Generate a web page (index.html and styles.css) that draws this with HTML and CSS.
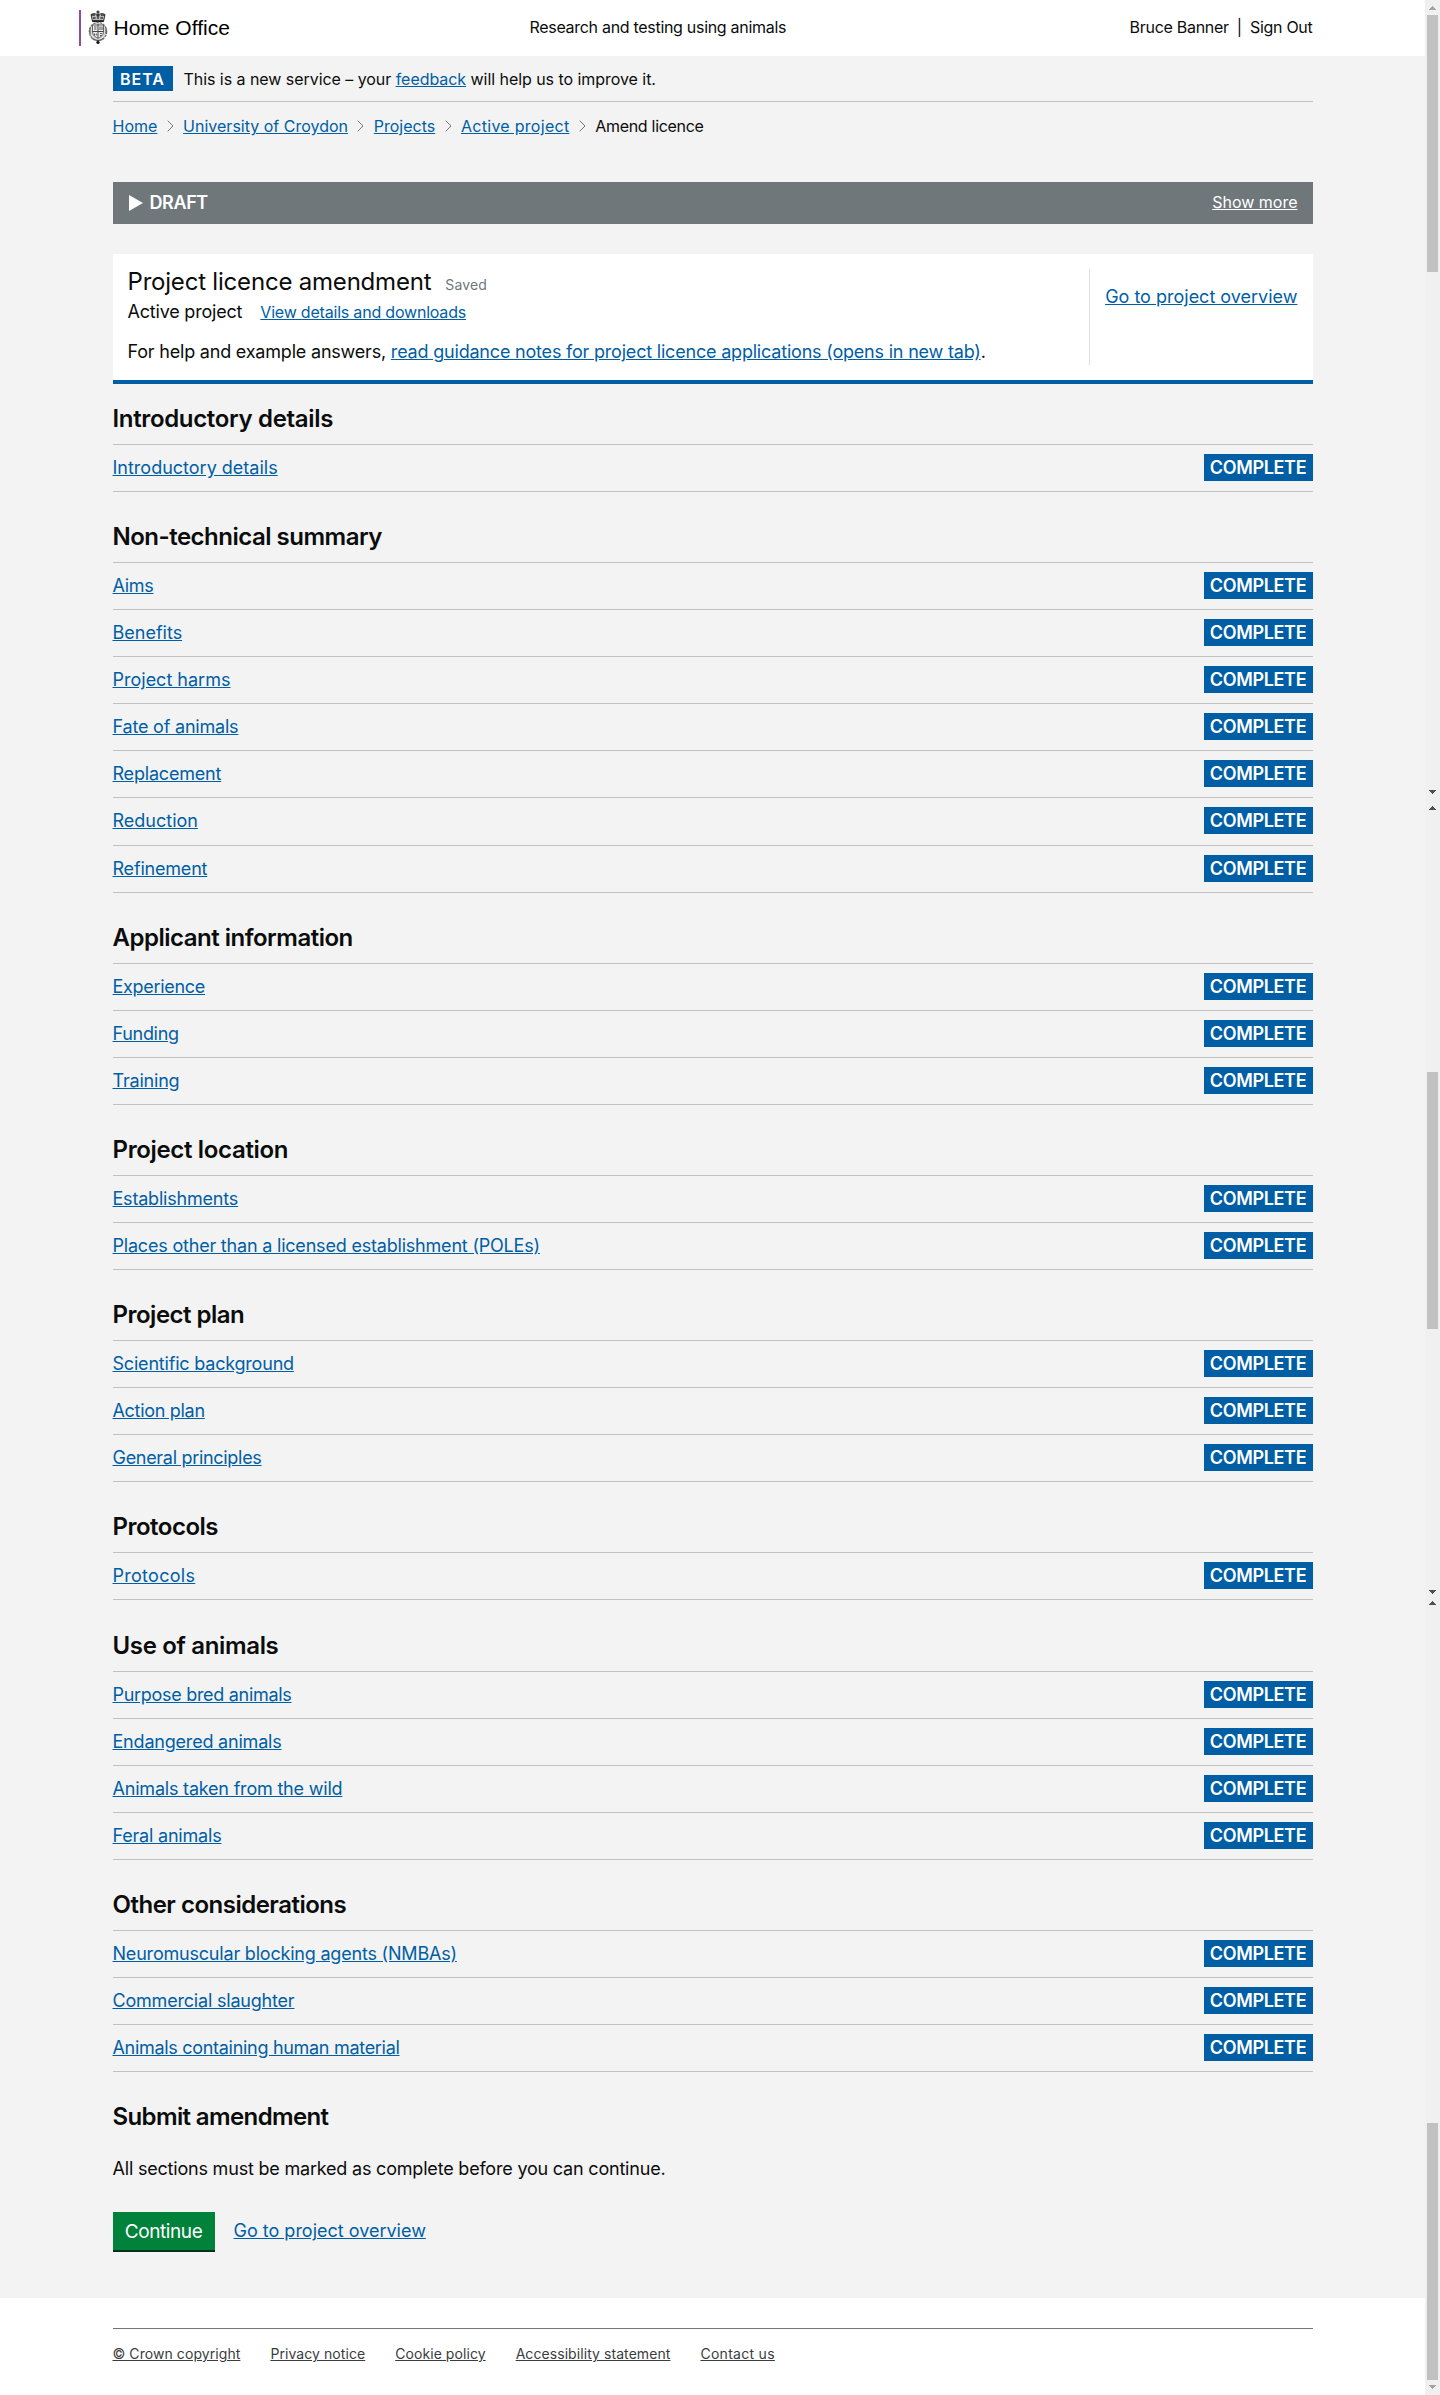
FILE: index.html
```
<!DOCTYPE html>
<html lang="en">
<head>
<meta charset="utf-8">
<title>Project licence amendment</title>
<link rel="stylesheet" href="styles.css">
</head>
<body>
<header class="header">
  <div class="header-inner">
    <div class="logo">
      <svg class="crest" width="20" height="36" viewBox="0 0 20 36" fill="none" stroke="#333" aria-hidden="true">
        <path d="M10 .5v4M8.500 2h3" stroke-width="1.300"/>
        <path d="M3 4.500l1.500 7h11l1.500-7-2.500-1-4.500 1-4.500-1z" fill="#bbb" stroke-width="1"/>
        <path d="M3 5h4M8.500 5.500h3M13 5h4M5 8h2.500M12.500 8H15M10 6v3" stroke-width="1.400"/>
        <path d="M4.500 11h11" stroke="#111" stroke-width="1.600"/>
        <ellipse cx="10" cy="21.500" rx="8.600" ry="9" fill="#ddd" stroke="#777" stroke-width="1.400" stroke-dasharray="2.500 .8"/>
        <path d="M4.500 15h11v7c0 4-3.500 5-5.500 6.500-2-1.500-5.500-2.500-5.500-6.500z" fill="#eee" stroke="#555" stroke-width=".9"/>
        <path d="M10 14v14M4.500 21.500h11" stroke="#444" stroke-width="1"/>
        <path d="M6 17h2.500M6 19h2.500M12 16.500v3.500M14 16.500v3.500M6.500 23.500v2M8.300 23.500v2M12 23.500h2M12 25.500h2M2 18v6M18 18v6" stroke="#555" stroke-width="1"/>
        <path d="M4 28.500l6 2.500 6-2.500" stroke="#666" stroke-width="1.200"/>
        <path d="M10 30.500v3.500M8.300 32.500h3.400" stroke="#111" stroke-width="1.600"/>
      </svg>
      <span class="logo-text">Home Office</span>
    </div>
    <div class="service">Research and testing using animals</div>
    <div class="user"><span>Bruce Banner</span><span>|</span><span>Sign Out</span></div>
  </div>
</header>
<main class="page">
  <div class="phase"><strong class="phase-tag">BETA</strong><span>This is a new service – your <a href="#">feedback</a> will help us to improve it.</span></div>
  <nav class="crumbs">
    <a href="#">Home</a>
    <svg width="7" height="12" viewBox="0 0 7 12"><path d="M.7.700L6 6 .7 11.300" fill="none" stroke="#6f777b"/></svg>
    <a href="#">University of Croydon</a>
    <svg width="7" height="12" viewBox="0 0 7 12"><path d="M.7.700L6 6 .7 11.300" fill="none" stroke="#6f777b"/></svg>
    <a href="#">Projects</a>
    <svg width="7" height="12" viewBox="0 0 7 12"><path d="M.7.700L6 6 .7 11.300" fill="none" stroke="#6f777b"/></svg>
    <a class="loose" href="#">Active project</a>
    <svg width="7" height="12" viewBox="0 0 7 12"><path d="M.7.700L6 6 .7 11.300" fill="none" stroke="#6f777b"/></svg>
    <span class="snug">Amend licence</span>
  </nav>
  <div class="status"><span class="status-name"><svg width="14" height="16" viewBox="0 0 14 16"><path d="M0 0l14 8-14 8z" fill="#fff"/></svg>DRAFT</span><a href="#">Show more</a></div>
  <section class="banner">
    <div class="banner-main">
      <div class="title-row"><h1>Project licence amendment</h1><span class="saved">Saved</span></div>
      <div class="sub-row"><span>Active project</span><a href="#">View details and downloads</a></div>
      <p class="help">For help and example answers, <a href="#">read guidance notes for project licence applications (opens in new tab)</a>.</p>
    </div>
    <div class="banner-side"><a class="even" href="#">Go to project overview</a></div>
  </section>
  <section class="group"><h2 class="wide">Introductory details</h2><ul>
    <li><a class="even" href="#">Introductory details</a><b>COMPLETE</b></li>
  </ul></section>
  <section class="group"><h2>Non-technical summary</h2><ul>
    <li><a class="snug" href="#">Aims</a><b>COMPLETE</b></li>
    <li><a class="even" href="#">Benefits</a><b>COMPLETE</b></li>
    <li><a class="even" href="#">Project harms</a><b>COMPLETE</b></li>
    <li><a href="#">Fate of animals</a><b>COMPLETE</b></li>
    <li><a href="#">Replacement</a><b>COMPLETE</b></li>
    <li><a class="even" href="#">Reduction</a><b>COMPLETE</b></li>
    <li><a href="#">Refinement</a><b>COMPLETE</b></li>
  </ul></section>
  <section class="group"><h2>Applicant information</h2><ul>
    <li><a class="snug" href="#">Experience</a><b>COMPLETE</b></li>
    <li><a class="snug" href="#">Funding</a><b>COMPLETE</b></li>
    <li><a href="#">Training</a><b>COMPLETE</b></li>
  </ul></section>
  <section class="group"><h2 class="wide">Project location</h2><ul>
    <li><a href="#">Establishments</a><b>COMPLETE</b></li>
    <li><a href="#">Places other than a licensed establishment (POLEs)</a><b>COMPLETE</b></li>
  </ul></section>
  <section class="group"><h2>Project plan</h2><ul>
    <li><a href="#">Scientific background</a><b>COMPLETE</b></li>
    <li><a class="snug" href="#">Action plan</a><b>COMPLETE</b></li>
    <li><a class="snug" href="#">General principles</a><b>COMPLETE</b></li>
  </ul></section>
  <section class="group"><h2>Protocols</h2><ul>
    <li><a class="loose" href="#">Protocols</a><b>COMPLETE</b></li>
  </ul></section>
  <section class="group"><h2 class="wide">Use of animals</h2><ul>
    <li><a class="snug" href="#">Purpose bred animals</a><b>COMPLETE</b></li>
    <li><a href="#">Endangered animals</a><b>COMPLETE</b></li>
    <li><a href="#">Animals taken from the wild</a><b>COMPLETE</b></li>
    <li><a href="#">Feral animals</a><b>COMPLETE</b></li>
  </ul></section>
  <section class="group"><h2>Other considerations</h2><ul>
    <li><a href="#">Neuromuscular blocking agents (NMBAs)</a><b>COMPLETE</b></li>
    <li><a href="#">Commercial slaughter</a><b>COMPLETE</b></li>
    <li><a class="snug" href="#">Animals containing human material</a><b>COMPLETE</b></li>
  </ul></section>
  <section class="submit">
    <h2 class="tight">Submit amendment</h2>
    <p>All sections must be marked as complete before you can continue.</p>
    <div class="actions"><button class="continue" type="button">Continue</button><a class="even" href="#">Go to project overview</a></div>
  </section>
</main>
<footer class="footer">
  <div class="footer-inner">
    <a href="#">© Crown copyright</a><a href="#">Privacy notice</a><a href="#">Cookie policy</a><a href="#">Accessibility statement</a><a class="loose" href="#">Contact us</a>
  </div>
</footer>
<svg class="scrollbar" width="15" height="2395" viewBox="0 0 15 2395" shape-rendering="crispEdges" aria-hidden="true">
  <path d="M0 0h15v2395H0z" fill="#f0f0f0"/>
  <path d="M2 15h11v257H2zM2 1072h11v257H2zM2 2123h11v257H2z" fill="#c1c1c1"/>
  <path d="M4 10l3.500-4 3.500 4zM4 2385l3.500 4 3.500-4z" fill="#a3a3a3"/>
  <path d="M4 790l3.500 4 3.500-4zM4 810l3.500-4 3.500 4zM4 1590l3.500 4 3.500-4zM4 1605l3.500-4 3.500 4z" fill="#505050"/>
</svg>
</body>
</html>
```
FILE: styles.css
```
* { box-sizing: border-box; }
body { margin: 0; position: relative; height: 2395px; display: flex; flex-direction: column; background: #fff; color: #0b0c0c; font: 18px/25px Inter, sans-serif; letter-spacing: -.2px; padding-right: 15px; }
a { color: #005ea5; text-decoration: underline; }
h1, h2, p, ul { margin: 0; padding: 0; font-weight: inherit; }
.header { height: 56px; }
.header-inner { width: 1200px; margin: 0 auto; padding-top: 10px; display: grid; grid-template-columns: 450px 1fr auto; font-size: 16px; line-height: 34px; }
.logo { display: flex; align-items: center; gap: 6px; height: 36px; margin-left: -34px; padding-left: 7px; border-left: 2px solid #8b4ba3; }
.logo-text { font: 21px/34px "Liberation Sans", Arial, sans-serif; color: #000; letter-spacing: 0; }
.service { margin-left: -33px; letter-spacing: -.3px; }
.user { display: flex; gap: 8px; letter-spacing: -.28px; }
.page { background: #f3f3f3; height: 2242px; padding: 0 calc((100% - 1200px) / 2); }
.phase { height: 46px; padding-top: 10px; border-bottom: 1px solid #bfc1c3; display: flex; gap: 11px; font-size: 16px; line-height: 26px; letter-spacing: -.05px; }
.phase-tag { background: #005ea5; color: #fff; height: 25px; width: 60px; text-align: center; letter-spacing: 1px; font-weight: 600; line-height: 26px; }
.crumbs { display: flex; align-items: center; gap: 9.4px; height: 50px; padding-bottom: 2px; font-size: 16px; line-height: 20px; letter-spacing: 0; }
.status { margin-top: 30px; height: 42px; padding: 0 15px 0 16px; background: #6f777b; color: #fff; display: flex; justify-content: space-between; line-height: 40px; font-size: 16px; letter-spacing: 0; }
.status-name { font-size: 18px; font-weight: 600; display: flex; align-items: center; gap: 7px; letter-spacing: -.4px; }
.status a { color: #fff; }
.banner { margin-top: 30px; height: 130px; background: #fff; border-bottom: 4px solid #005ea5; padding: 15px; display: flex; justify-content: space-between; }
.title-row { display: flex; align-items: baseline; gap: 14px; line-height: 26px; }
h1 { font-size: 24px; }
.saved { font-size: 14px; color: #6f777b; letter-spacing: .1px; }
.sub-row { display: flex; align-items: baseline; gap: 18px; margin-top: -1px; line-height: 29px; }
.sub-row a { font-size: 16px; }
.help { margin-top: 12px; }
.banner-side { border-left: 1px solid #dee0e2; padding: 15px 0 0 15px; height: 96px; }
.group { margin-bottom: 30.08px; }
.banner + .group { margin-top: 20px; }
h2 { font-size: 24px; font-weight: 600; line-height: 30px; letter-spacing: -.5px; }
.group ul { list-style: none; margin-top: 10px; border-top: 1px solid #bfc1c3; }
.group li { height: 47.0625px; border-bottom: 1px solid #bfc1c3; display: flex; justify-content: space-between; padding-top: 9px; line-height: 27px; }
.group b { background: #005ea5; color: #fff; font-weight: 600; height: 27px; width: 109px; text-align: center; letter-spacing: -.35px; }
.submit p { margin-top: 24px; }
.actions { display: flex; gap: 19px; margin-top: 31px; line-height: 38px; }
.continue { width: 102px; height: 40px; padding: 2px 0 0; border: 0; border-bottom: 2px solid #00311e; background: #00823b; color: #fff; font: 19px/36px Inter, sans-serif; letter-spacing: -.4px; }
.footer-inner { width: 1200px; margin: 30px auto 0; border-top: 1px solid #6f777b; padding-top: 15px; display: flex; gap: 30px; font-size: 14px; line-height: 20px; letter-spacing: .07px; }
.footer a { color: #3a3c3e; }
.scrollbar { position: absolute; right: 0; top: 0; }

/* tracking adjustments */
.even { letter-spacing: 0; }
.loose { letter-spacing: .28px; }
.snug { letter-spacing: -.3px; }
h2.wide { letter-spacing: -.34px; }
h2.tight { letter-spacing: -.62px; }
```
